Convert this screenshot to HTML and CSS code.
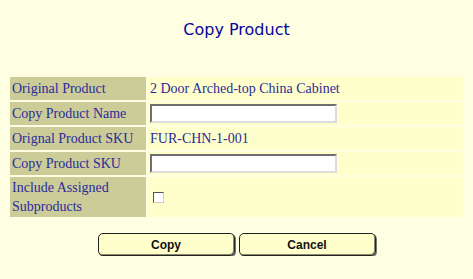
FILE: index.html
```html
<!DOCTYPE html>
<html>
<head>
    <link rel="stylesheet" href="styles.css">
</head>
<body>
<h1 class="title">Copy Product</h1>
<table class="form">
    <tr>
        <td class="label">Original Product</td>
        <td class="value">2 Door Arched-top China Cabinet</td>
    </tr>
    <tr>
        <td class="label">Copy Product Name</td>
        <td class="value"><input type="text" class="field"></td>
    </tr>
    <tr>
        <td class="label">Orignal Product SKU</td>
        <td class="value">FUR-CHN-1-001</td>
    </tr>
    <tr>
        <td class="label">Copy Product SKU</td>
        <td class="value"><input type="text" class="field"></td>
    </tr>
    <tr class="tall">
        <td class="label">Include Assigned<br>Subproducts</td>
        <td class="value"><span class="check"></span></td>
    </tr>
</table>
<div class="buttons">
    <button class="btn">Copy</button>
    <button class="btn">Cancel</button>
</div>
</body>
</html>
```

FILE: styles.css
```css
body{
    margin:0;
    background:#fefee2;
    font-family:'Liberation Serif', serif;
    color:#2b2b99;
}
.title{
    margin:0;
    padding-top:20px;
    height:55px;
    text-align:center;
    font-family:'DejaVu Sans', sans-serif;
    font-weight:normal;
    font-size:16px;
    color:#06069a;
}
.form{
    margin:0 8px;
    width:457px;
    border-collapse:separate;
    border-spacing:2px;
    font-size:14px;
}
.form td{
    height:23px;
    padding:0 2px;
    box-sizing:border-box;
    line-height:17px;
}
.form .tall td{
    height:40px;
    line-height:19px;
}
.label{
    width:136px;
    background:#cccc99;
}
.value{
    background:#ffffcc;
}
.field{
    display:block;
    margin:0;
    width:187px;
    height:19px;
    box-sizing:border-box;
    border:2px solid;
    border-color:#6e6e6e #dcdcdc #dcdcdc #6e6e6e;
    background:#fff;
    padding:0;
}
.check{
    display:block;
    margin-left:3px;
    width:11px;
    height:11px;
    box-sizing:border-box;
    border:1px solid;
    border-color:#555 #ccc #ccc #555;
    background:#fff;
}
.buttons{
    display:flex;
    justify-content:center;
    gap:4px;
    margin-top:14px;
}
.btn{
    width:137px;
    height:23px;
    border:1px solid #222;
    border-radius:5px;
    background:#ffffcc;
    box-shadow:inset -1px -1px 0 #8a8a6a, 1px 1px 0 #777;
    font-family:'Liberation Sans', sans-serif;
    font-weight:bold;
    font-size:12px;
    color:#111;
    padding:0;
}
```
